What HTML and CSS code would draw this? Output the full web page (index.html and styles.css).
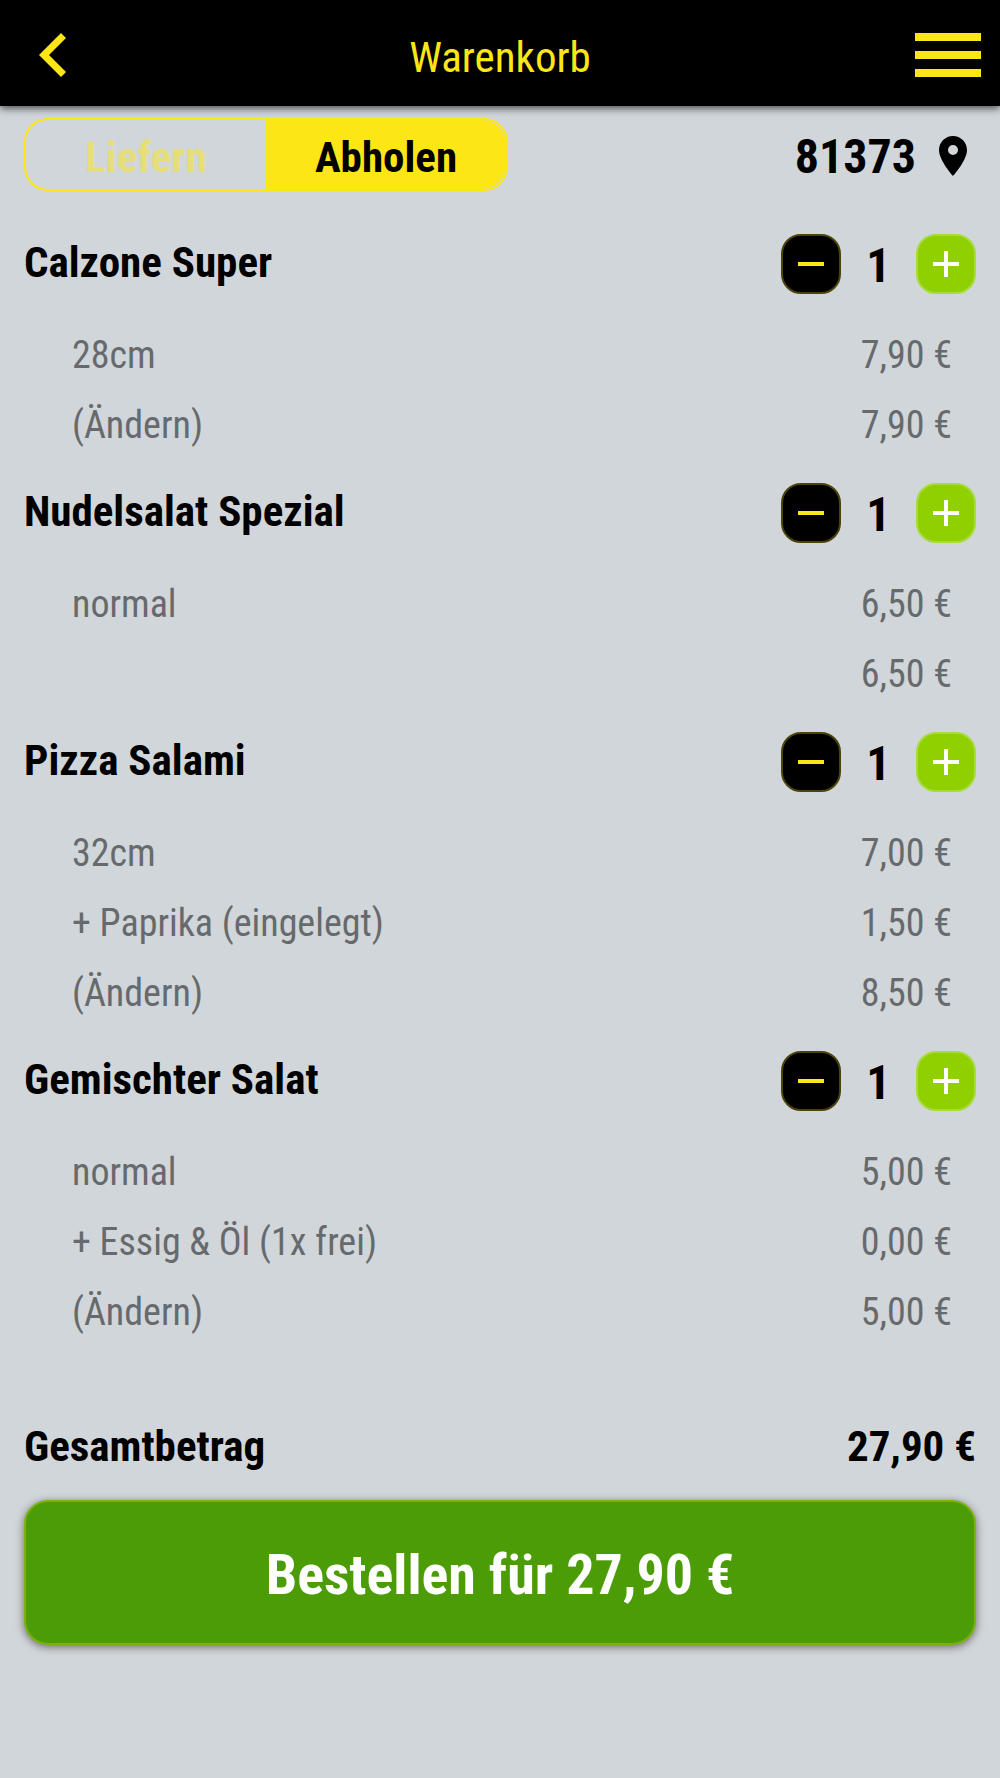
FILE: index.html
```
<!DOCTYPE html>
<html lang="de">
<head>
<meta charset="utf-8">
<meta name="viewport" content="width=device-width, initial-scale=1">
<title>Warenkorb</title>
<link rel="stylesheet" href="styles.css">
</head>
<body>
<svg class="sprite" aria-hidden="true">
  <symbol id="minus" viewBox="0 0 26 26"><path d="M0 11h26v4H0z"/></symbol>
  <symbol id="plus" viewBox="0 0 26 26"><path d="M0 11h26v4H0zM11 0h4v26h-4z"/></symbol>
</svg>
<header class="bar">
  <button class="icon-button" type="button" aria-label="Zurück">
    <svg width="27" height="44" viewBox="0 0 27 44"><path d="M22 0l5 5-17 17 17 17-5 5L0 22z"/></svg>
  </button>
  <h1 class="bar-title">Warenkorb</h1>
  <button class="icon-button" type="button" aria-label="Menü">
    <svg width="66" height="44" viewBox="0 0 66 44"><path d="M0 0h66v8H0zM0 18h66v8H0zM0 36h66v8H0z"/></svg>
  </button>
</header>
<main class="cart">
  <div class="options">
    <fieldset class="toggle">
      <label class="toggle-option"><input class="toggle-input" type="radio" name="mode"><span class="toggle-text">Liefern</span></label>
      <label class="toggle-option"><input class="toggle-input" type="radio" name="mode" checked><span class="toggle-text">Abholen</span></label>
    </fieldset>
    <button class="location" type="button">81373
      <svg width="28" height="40" viewBox="5 2 14 20"><path d="M12 2C8.130 2 5 5.130 5 9c0 5.250 7 13 7 13s7-7.750 7-13c0-3.870-3.130-7-7-7zm0 9.500a2.500 2.500 0 0 1 0-5 2.500 2.500 0 0 1 0 5z"/></svg>
    </button>
  </div>

  <section class="item">
    <div class="item-head">
      <h2 class="item-name">Calzone Super</h2>
      <div class="stepper">
        <button class="step step-less" type="button" aria-label="Weniger"><svg width="26" height="26"><use href="#minus"/></svg></button>
        <span class="count">1</span>
        <button class="step step-more" type="button" aria-label="Mehr"><svg width="26" height="26"><use href="#plus"/></svg></button>
      </div>
    </div>
    <ul class="lines">
      <li class="line"><span>28cm</span><span>7,90 €</span></li>
      <li class="line"><a class="edit" href="#">(Ändern)</a><span>7,90 €</span></li>
    </ul>
  </section>

  <section class="item">
    <div class="item-head">
      <h2 class="item-name">Nudelsalat Spezial</h2>
      <div class="stepper">
        <button class="step step-less" type="button" aria-label="Weniger"><svg width="26" height="26"><use href="#minus"/></svg></button>
        <span class="count">1</span>
        <button class="step step-more" type="button" aria-label="Mehr"><svg width="26" height="26"><use href="#plus"/></svg></button>
      </div>
    </div>
    <ul class="lines">
      <li class="line"><span>normal</span><span>6,50 €</span></li>
      <li class="line"><span></span><span>6,50 €</span></li>
    </ul>
  </section>

  <section class="item">
    <div class="item-head">
      <h2 class="item-name">Pizza Salami</h2>
      <div class="stepper">
        <button class="step step-less" type="button" aria-label="Weniger"><svg width="26" height="26"><use href="#minus"/></svg></button>
        <span class="count">1</span>
        <button class="step step-more" type="button" aria-label="Mehr"><svg width="26" height="26"><use href="#plus"/></svg></button>
      </div>
    </div>
    <ul class="lines">
      <li class="line"><span>32cm</span><span>7,00 €</span></li>
      <li class="line"><span>+ Paprika (eingelegt)</span><span>1,50 €</span></li>
      <li class="line"><a class="edit" href="#">(Ändern)</a><span>8,50 €</span></li>
    </ul>
  </section>

  <section class="item">
    <div class="item-head">
      <h2 class="item-name">Gemischter Salat</h2>
      <div class="stepper">
        <button class="step step-less" type="button" aria-label="Weniger"><svg width="26" height="26"><use href="#minus"/></svg></button>
        <span class="count">1</span>
        <button class="step step-more" type="button" aria-label="Mehr"><svg width="26" height="26"><use href="#plus"/></svg></button>
      </div>
    </div>
    <ul class="lines">
      <li class="line"><span>normal</span><span>5,00 €</span></li>
      <li class="line"><span>+ Essig &amp; Öl (1x frei)</span><span>0,00 €</span></li>
      <li class="line"><a class="edit" href="#">(Ändern)</a><span>5,00 €</span></li>
    </ul>
  </section>

  <div class="total"><span>Gesamtbetrag</span><span>27,90 €</span></div>
  <button class="order" type="button">Bestellen für 27,90 €</button>
</main>
</body>
</html>
```
FILE: styles.css
```
* { box-sizing: border-box; }

body {
  margin: 0;
  min-height: 100vh;
  background: #d1d6da;
  color: #000;
  font-family: "Roboto Condensed", Roboto, sans-serif;
  font-size: 43px;
}

button {
  border: 0;
  padding: 0;
  background: none;
  color: inherit;
  font: inherit;
  cursor: pointer;
}

svg { display: block; fill: currentColor; }
.sprite { display: none; }

.bar {
  display: grid;
  grid-template-columns: 66px 1fr 66px;
  align-items: center;
  height: 106px;
  padding: 3px 19px 0;
  background: #000;
  color: #fce615;
  box-shadow: 0 2px 8px rgba(0, 0, 0, .7);
}
.icon-button { justify-self: center; }
.bar-title { margin: 0; padding-top: 4px; text-align: center; font-size: 43px; font-weight: 400; line-height: 52px; }

.cart { padding: 12px 24px 24px; }

.options { display: flex; justify-content: space-between; align-items: center; margin-bottom: 20px; }
.toggle {
  display: flex;
  width: 484px;
  height: 73px;
  margin: 0;
  padding: 0;
  border: 2px solid #fce615;
  border-radius: 24px;
  overflow: hidden;
}
.toggle-option { flex: 1; display: flex; cursor: pointer; }
.toggle-input { appearance: none; width: 0; height: 0; margin: 0; }
.toggle-text {
  flex: 1;
  display: flex;
  align-items: center;
  justify-content: center;
  padding-top: 4px;
  color: rgba(252, 230, 21, .5);
  font-weight: 700;
}
.toggle-input:checked + .toggle-text { background: #fce615; color: #000; }
.location { display: flex; align-items: center; gap: 23px; padding: 3px 9px 0 0; font-size: 48px; font-weight: 700; }

.item-head {
  display: flex;
  justify-content: space-between;
  align-items: center;
  height: 109px;
  padding-bottom: 4px;
}
.item-name { margin: 0; padding-bottom: 3px; font-size: 43px; font-weight: 700; line-height: 52px; }
.stepper { display: flex; align-items: center; }
.step {
  display: grid;
  place-items: center;
  width: 60px;
  height: 60px;
  border: 2px solid;
  border-radius: 20px;
}
.step-less { background: #000; border-color: #4b4406; color: #fce615; }
.step-more { background: #90d000; border-color: #a6dc3c; color: #fff; }
.count { width: 75px; padding-top: 3px; text-align: center; font-size: 48px; font-weight: 700; }

.lines { margin: 0; padding: 0 24px 0 48px; list-style: none; color: #676a6c; font-size: 38px; }
.line { display: flex; justify-content: space-between; align-items: center; height: 70px; }
.edit { color: inherit; text-decoration: none; }

.total {
  display: flex;
  justify-content: space-between;
  margin: 73px 0 28px;
  font-weight: 700;
  line-height: 52px;
}
.order {
  width: 100%;
  height: 145px;
  padding-top: 4px;
  border: 2px solid #7db20d;
  border-radius: 24px;
  background: #4c9c08;
  color: #fff;
  box-shadow: 0 2px 8px rgba(0, 0, 0, .5);
  font-size: 56px;
  font-weight: 700;
}
```
